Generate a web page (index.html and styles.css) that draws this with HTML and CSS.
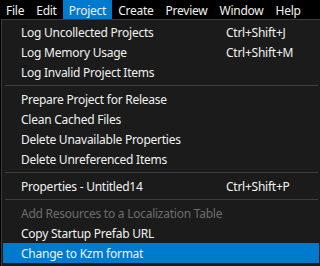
FILE: index.html
```html
<!DOCTYPE html>
<html>
<head>
<meta charset="utf-8">
<link rel="stylesheet" href="styles.css">
</head>
<body>
<div class="menubar">
  <span class="top">File</span>
  <span class="top">Edit</span>
  <span class="top active">Project</span>
  <span class="top">Create</span>
  <span class="top">Preview</span>
  <span class="top">Window</span>
  <span class="top">Help</span>
</div>
<div class="dropdown">
  <div class="item"><span class="label">Log Uncollected Projects</span><span class="key">Ctrl+Shift+J</span></div>
  <div class="item"><span class="label">Log Memory Usage</span><span class="key">Ctrl+Shift+M</span></div>
  <div class="item"><span class="label">Log Invalid Project Items</span></div>
  <div class="sep"></div>
  <div class="item"><span class="label">Prepare Project for Release</span></div>
  <div class="item"><span class="label">Clean Cached Files</span></div>
  <div class="item"><span class="label">Delete Unavailable Properties</span></div>
  <div class="item"><span class="label">Delete Unreferenced Items</span></div>
  <div class="sep"></div>
  <div class="item"><span class="label">Properties - Untitled14</span><span class="key">Ctrl+Shift+P</span></div>
  <div class="sep"></div>
  <div class="item disabled"><span class="label">Add Resources to a Localization Table</span></div>
  <div class="item"><span class="label">Copy Startup Prefab URL</span></div>
  <div class="item selected"><span class="label">Change to Kzm format</span></div>
</div>
</body>
</html>
```
FILE: styles.css
```css
html, body {
  margin: 0;
  padding: 0;
  background: #000;
  width: 320px;
  height: 266px;
  overflow: hidden;
  font-family: "Noto Sans", "Open Sans", sans-serif;
  font-size: 12px;
  letter-spacing: -0.25px;
  color: #f1f1f1;
}
.menubar {
  display: flex;
  height: 19px;
  background: #000;
}
.top {
  padding: 0 6px;
  line-height: 21px;
  height: 19px;
  overflow: hidden;
}
.top.active {
  background: #007acc;
}
.dropdown {
  margin-left: 1px;
  width: 316px;
  height: 245px;
  border: 1px solid #3c3c3c;
  padding: 2px 1px;
  background: #1b1b1b;
}
.item {
  display: flex;
  height: 20px;
  line-height: 22px;
  overflow: hidden;
  white-space: nowrap;
}
.label {
  padding-left: 18px;
  width: 205px;
}
.key {
  flex: 1;
}
.disabled {
  color: #6d6d6d;
}
.selected {
  background: #007acc;
}
.sep {
  height: 1px;
  background: #3f3f3f;
  margin: 3px 1px 3px 2px;
}
```
